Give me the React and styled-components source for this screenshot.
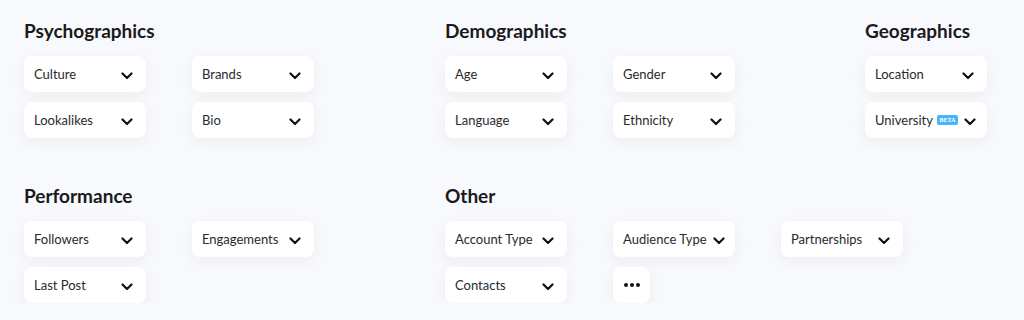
import React from "react";
import styled, { createGlobalStyle } from "styled-components";

const GlobalStyle = createGlobalStyle`
  body {
    margin: 0;
    background: #f8f9fc;
    font-family: "Lato", "Noto Sans", sans-serif;
    color: #1c1c1e;
  }
`;

const sections = [
  { title: "Psychographics", cols: 2, items: ["Culture", "Brands", "Lookalikes", "Bio"] },
  { title: "Demographics", cols: 2, items: ["Age", "Gender", "Language", "Ethnicity"] },
  { title: "Geographics", cols: 1, items: ["Location", { label: "University", beta: true }] },
  { title: "Performance", cols: 2, items: ["Followers", "Engagements", "Last Post"] },
  {
    title: "Other",
    cols: 3,
    wide: true,
    items: ["Account Type", "Audience Type", "Partnerships", "Contacts", { more: true }],
  },
];

function Chevron() {
  return (
    <ChevronIcon width="12" height="8" viewBox="0 0 12 8" fill="none">
      <path
        d="M1.5 1.5L6 6L10.5 1.5"
        stroke="#111"
        strokeWidth="2.2"
        strokeLinecap="round"
        strokeLinejoin="round"
      />
    </ChevronIcon>
  );
}

function FilterButton({ item }) {
  if (item.more) {
    return (
      <MoreButton>
        <Dot />
        <Dot />
        <Dot />
      </MoreButton>
    );
  }
  const label = typeof item === "string" ? item : item.label;
  return (
    <Button>
      <Label>
        {label}
        {item.beta && <Beta>BETA</Beta>}
      </Label>
      <Chevron />
    </Button>
  );
}

export default function App() {
  return (
    <>
      <GlobalStyle />
      <Page>
        {sections.map((s) => (
          <Section key={s.title} $wide={s.wide}>
            <Title>{s.title}</Title>
            <ButtonGrid $cols={s.cols}>
              {s.items.map((item, i) => (
                <FilterButton key={i} item={item} />
              ))}
            </ButtonGrid>
          </Section>
        ))}
      </Page>
    </>
  );
}

const Page = styled.div`
  display: grid;
  grid-template-columns: 421px 420px 1fr;
  row-gap: 47px;
  padding: 20px 0 0 24px;
`;

const Section = styled.section`
  grid-column: ${(p) => (p.$wide ? "span 2" : "auto")};
`;

const Title = styled.h2`
  margin: 0 0 14px;
  font-size: 19px;
  line-height: 22px;
  font-weight: 700;
  color: #1a1a1c;
`;

const ButtonGrid = styled.div`
  display: grid;
  grid-template-columns: repeat(${(p) => p.$cols}, 122px);
  column-gap: 46px;
  row-gap: 10px;
`;

const Button = styled.div`
  box-sizing: border-box;
  height: 36px;
  display: flex;
  align-items: center;
  gap: 6px;
  justify-content: space-between;
  padding: 0 13px 0 10px;
  background: #fff;
  border-radius: 8px;
  box-shadow: 0 4px 14px rgba(30, 40, 80, 0.05);
`;

const ChevronIcon = styled.svg`
  flex-shrink: 0;
  margin-top: 3px;
`;

const Label = styled.span`
  display: flex;
  align-items: center;
  font-size: 13px;
  color: #2a2a2c;
  white-space: nowrap;
`;

const Beta = styled.span`
  margin-left: 4px;
  width: 21px;
  height: 10px;
  border-radius: 2px;
  background: #45b6f7;
  color: #fff;
  font-family: "Liberation Serif", serif;
  font-size: 6px;
  font-weight: 700;
  line-height: 10px;
  text-align: center;
`;

const MoreButton = styled(Button)`
  width: 37px;
  padding: 0;
  justify-content: center;
  gap: 2px;
`;

const Dot = styled.span`
  width: 4px;
  height: 4px;
  border-radius: 50%;
  background: #111;
`;
